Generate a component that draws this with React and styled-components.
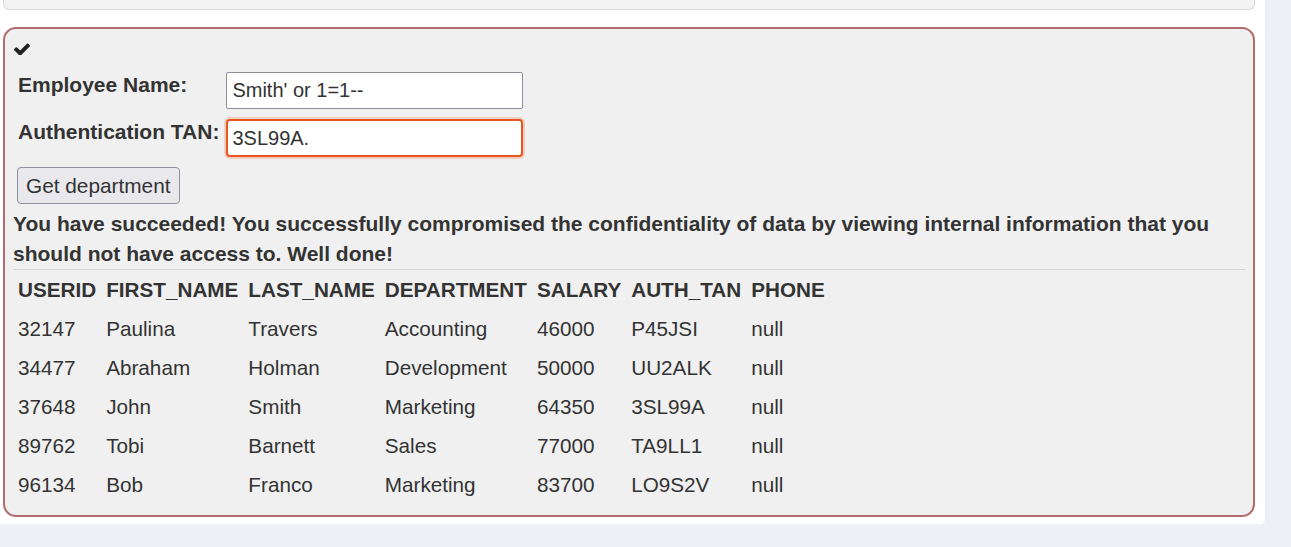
import React, { useEffect, useRef } from "react";
import styled, { createGlobalStyle, css } from "styled-components";

const Global = createGlobalStyle`
  html, body { margin: 0; padding: 0; }
  body {
    background: #eef0f5;
    font-family: "Liberation Sans", Arial, sans-serif;
    color: #333;
    font-size: 21px;
  }
`;

const Panel = styled.div`
  width: 1265px;
  box-sizing: border-box;
  background: #ffffff;
  padding: 0 10px 7px 3px;
  border-bottom-right-radius: 5px;
`;

const PrevBox = styled.div`
  height: 10px;
  box-sizing: border-box;
  border: 1px solid #d9d9d9;
  border-top: none;
  border-radius: 0 0 6px 6px;
  background: #f3f3f3;
`;

const AttackBox = styled.div`
  margin-top: 17px;
  border: 2px solid #b36c6c;
  border-radius: 13px;
  background: #f0f0f0;
  padding: 14px 8px 11px 8px;
`;

const Check = styled.svg`
  display: block;
  width: 16px;
  height: 12px;
  margin-left: 1px;
  fill: #222;
`;

const FormGrid = styled.div`
  display: grid;
  grid-template-columns: auto 297px;
  justify-content: start;
  row-gap: 10px;
  align-items: start;
  margin-top: 17px;
`;

const Label = styled.label`
  font-weight: bold;
  padding: 1px 7px 0 5px;
  line-height: 24px;
  white-space: nowrap;
`;

const Input = styled.input`
  width: 297px;
  height: 37px;
  box-sizing: border-box;
  font: inherit;
  font-size: 20px;
  color: #333;
  padding: 0 5px;
  background: #fff;
  border: 1px solid #8f8f9d;
  border-radius: 2px;
  outline: none;
  caret-color: #222;
  ${(p) =>
    p.$focused &&
    css`
      height: 38px;
      border: 2px solid #e8561f;
      border-radius: 4px;
      padding: 0 4px;
      box-shadow: 0 0 0 2px rgba(240, 140, 100, 0.35);
    `}
`;

const Button = styled.button`
  display: block;
  margin: 10px 0 0 4px;
  height: 37px;
  width: 163px;
  box-sizing: border-box;
  font: inherit;
  font-size: 20.8px;
  color: #333;
  padding: 0 8px;
  text-align: left;
  background: #e9e9ed;
  border: 1px solid #8f8f9d;
  border-radius: 4px;
`;

const Feedback = styled.p`
  margin: 5px 0 0 0;
  font-weight: bold;
  line-height: 30px;
`;

const Rule = styled.hr`
  margin: 0;
  border: none;
  border-top: 1px solid #d6d6d6;
`;

const Table = styled.table`
  border-collapse: collapse;
  border-spacing: 0;
  font-size: 20.7px;
`;

const Th = styled.th`
  font-weight: bold;
  text-align: left;
  padding: 0 5px;
  height: 39px;
  line-height: 24px;
  white-space: nowrap;
`;

const Td = styled.td`
  padding: 0 5px;
  height: 39px;
  line-height: 24px;
  white-space: nowrap;
`;

const headers = ["USERID", "FIRST_NAME", "LAST_NAME", "DEPARTMENT", "SALARY", "AUTH_TAN", "PHONE"];
const rows = [
  ["32147", "Paulina", "Travers", "Accounting", "46000", "P45JSI", "null"],
  ["34477", "Abraham", "Holman", "Development", "50000", "UU2ALK", "null"],
  ["37648", "John", "Smith", "Marketing", "64350", "3SL99A", "null"],
  ["89762", "Tobi", "Barnett", "Sales", "77000", "TA9LL1", "null"],
  ["96134", "Bob", "Franco", "Marketing", "83700", "LO9S2V", "null"],
];

export default function App() {
  const tanRef = useRef(null);
  useEffect(() => {
    const el = tanRef.current;
    if (el) {
      el.focus();
      const n = el.value.length;
      el.setSelectionRange(n, n);
    }
  }, []);
  return (
    <>
      <Global />
      <Panel>
        <PrevBox />
        <AttackBox>
          <Check viewBox="121 300 1550 1130" aria-hidden="true">
            <path d="M1671 566q0 40-28 68l-724 724-136 136q-28 28-68 28t-68-28l-136-136-362-362q-28-28-28-68t28-68l136-136q28-28 68-28t68 28l294 295 656-657q28-28 68-28t68 28l136 136q28 28 28 68z" />
          </Check>
          <FormGrid>
            <Label>Employee Name:</Label>
            <Input defaultValue="Smith' or 1=1--" />
            <Label>Authentication TAN:</Label>
            <Input ref={tanRef} $focused defaultValue="3SL99A." />
          </FormGrid>
          <Button type="button">Get department</Button>
          <Feedback>
            You have succeeded! You successfully compromised the confidentiality of data by viewing internal
            information that you should not have access to. Well done!
          </Feedback>
          <Rule />
          <Table>
            <thead>
              <tr>
                {headers.map((h) => (
                  <Th key={h}>{h}</Th>
                ))}
              </tr>
            </thead>
            <tbody>
              {rows.map((r) => (
                <tr key={r[0]}>
                  {r.map((c, i) => (
                    <Td key={i}>{c}</Td>
                  ))}
                </tr>
              ))}
            </tbody>
          </Table>
        </AttackBox>
      </Panel>
    </>
  );
}
